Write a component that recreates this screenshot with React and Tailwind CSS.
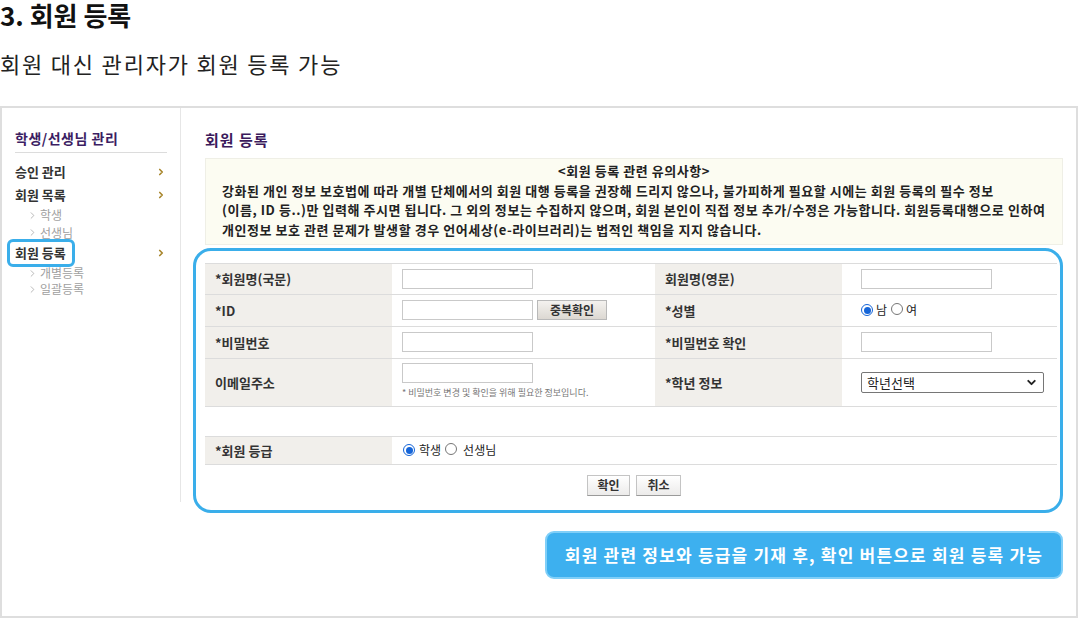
import React from 'react';
import { ChevronRight, ChevronDown } from 'lucide-react';

const KR = { fontFamily: '"Noto Sans CJK KR", "Noto Sans", sans-serif' };

const Radio = ({ checked }) =>
    checked ? (
        <span className="inline-flex items-center justify-center w-[12px] h-[12px] rounded-full border border-[#1565d8] bg-white">
            <span className="w-[7px] h-[7px] rounded-full bg-[#1565d8]" />
        </span>
    ) : (
        <span className="inline-block w-[12px] h-[12px] rounded-full border border-[#767676] bg-white" />
    );

const Box = ({ className = '' }) => (
    <div className={`w-[131px] h-[20px] border border-[#c9c9c9] bg-white ${className}`} />
);

const Label = ({ children, className = '' }) => (
    <div className={`bg-[#f1efeb] pl-[10px] flex items-center text-[13px] font-bold text-[#333] ${className}`}>
        {children}
    </div>
);

const SideItem = ({ label, className = '' }) => (
    <div className={`flex items-center justify-between text-[13px] font-bold text-[#333] ${className}`}>
        <span>{label}</span>
        <ChevronRight size={10} strokeWidth={4} className="text-[#a8862c] mr-[1px]" />
    </div>
);

const SubItem = ({ label, className = '' }) => (
    <div className={`flex items-center pl-[12px] text-[12px] text-[#a0a0a0] ${className}`}>
        <ChevronRight size={11} strokeWidth={1.5} className="text-[#999] mr-[2px]" />
        <span>{label}</span>
    </div>
);

export default function App() {
    return (
        <div className="w-[1080px] h-[618px] bg-white overflow-hidden" style={KR}>
            <h1 className="text-[26px] leading-[30px] font-bold text-[#111]">3. 회원 등록</h1>
            <p className="mt-[18px] text-[22px] leading-[30px] tracking-[1.8px] text-[#222]">회원 대신 관리자가 회원 등록 가능</p>

            <div className="mt-[28px] w-[1078px] h-[512px] border-2 border-[#dedede] flex">
                {/* sidebar */}
                <div className="w-[179px] h-[394px] border-r border-[#e6e6e6] px-[13px] pt-[20px] shrink-0">
                    <div className="pb-[4px] border-b border-[#dcdcdc]">
                        <div className="h-[20px] leading-[20px] text-[14px] tracking-[0.5px] font-bold text-[#3c1e63]">학생/선생님 관리</div>
                    </div>
                    <SideItem label="승인 관리" className="mt-[7px] h-[24px]" />
                    <SideItem label="회원 목록" className="h-[22px]" />
                    <SubItem label="학생" className="h-[18px]" />
                    <SubItem label="선생님" className="h-[17px]" />
                    <div className="flex items-center justify-between h-[24px] text-[13px] font-bold text-[#333]">
                        <span className="relative">
                            회원 등록
                            <span className="absolute -left-[8px] -right-[9px] -top-[4px] -bottom-[4px] border-[3px] border-[#3aaeea] rounded-[6px]" />
                        </span>
                        <ChevronRight size={10} strokeWidth={4} className="text-[#a8862c] mr-[1px]" />
                    </div>
                    <SubItem label="개별등록" className="h-[16px]" />
                    <SubItem label="일괄등록" className="h-[16px]" />
                </div>

                {/* main */}
                <div className="flex-1 pl-[24px] pr-[13px] pt-[22px] flex flex-col">
                    <div className="h-[20px] leading-[20px] text-[15px] tracking-[1px] font-bold text-[#3b1a5c]">회원 등록</div>

                    <div className="mt-[8px] bg-[#fcfcf2] border border-[#efefe6] pl-[16px] pt-[2px] pb-[4px] text-[13px] leading-[19.7px] font-bold text-[#222] tracking-[0.55px] whitespace-nowrap">
                        <div className="text-center -ml-[16px]">&lt;회원 등록 관련 유의사항&gt;</div>
                        <div>강화된 개인 정보 보호법에 따라 개별 단체에서의 회원 대행 등록을 권장해 드리지 않으나, 불가피하게 필요할 시에는 회원 등록의 필수 정보</div>
                        <div>(이름, ID 등..)만 입력해 주시면 됩니다. 그 외의 정보는 수집하지 않으며, 회원 본인이 직접 정보 추가/수정은 가능합니다. 회원등록대행으로 인하여</div>
                        <div>개인정보 보호 관련 문제가 발생할 경우 언어세상(e-라이브러리)는 법적인 책임을 지지 않습니다.</div>
                    </div>

                    {/* highlighted form */}
                    <div className="mt-[3px] -ml-[12px] border-[3px] border-[#3aaeea] rounded-[18px] pl-[9px] pr-[3px] pt-[12px] pb-[14px]">
                        <div className="grid grid-cols-[187px_263px_187px_1fr] border-t border-[#dcdcdc] text-[#333]">
                            <Label className="h-[31px] border-b border-[#dcdcdc]">*회원명(국문)</Label>
                            <div className="h-[31px] border-b border-[#dcdcdc] pl-[10px] flex items-center"><Box /></div>
                            <Label className="h-[31px] border-b border-[#dcdcdc]">회원명(영문)</Label>
                            <div className="h-[31px] border-b border-[#dcdcdc] pl-[19px] flex items-center"><Box /></div>

                            <Label className="h-[32px] border-b border-[#dcdcdc]">*ID</Label>
                            <div className="h-[32px] border-b border-[#dcdcdc] pl-[10px] flex items-center gap-[4px]">
                                <Box />
                                <div className="w-[70px] h-[20px] border border-[#b9b9b9] bg-gradient-to-b from-[#f4f2ef] to-[#dcd8d2] flex items-center justify-center text-[12px] font-bold text-[#333]">중복확인</div>
                            </div>
                            <Label className="h-[32px] border-b border-[#dcdcdc]">*성별</Label>
                            <div className="h-[32px] border-b border-[#dcdcdc] pl-[19px] flex items-center text-[12px] text-[#222]">
                                <Radio checked />
                                <span className="ml-[3px]">남</span>
                                <span className="ml-[4px]"><Radio /></span>
                                <span className="ml-[3px]">여</span>
                            </div>

                            <Label className="h-[32px] border-b border-[#dcdcdc]">*비밀번호</Label>
                            <div className="h-[32px] border-b border-[#dcdcdc] pl-[10px] flex items-center"><Box /></div>
                            <Label className="h-[32px] border-b border-[#dcdcdc]">*비밀번호 확인</Label>
                            <div className="h-[32px] border-b border-[#dcdcdc] pl-[19px] flex items-center"><Box /></div>

                            <Label className="h-[48px] border-b border-[#dcdcdc]">이메일주소</Label>
                            <div className="h-[48px] border-b border-[#dcdcdc] pl-[10px] pt-[4px]">
                                <Box />
                                <div className="mt-[3px] text-[9px] leading-[14px] text-[#777]">* 비밀번호 변경 및 확인을 위해 필요한 정보입니다.</div>
                            </div>
                            <Label className="h-[48px] border-b border-[#dcdcdc]">*학년 정보</Label>
                            <div className="h-[48px] border-b border-[#dcdcdc] pl-[19px] flex items-center">
                                <div className="w-[183px] h-[21px] border border-[#767676] rounded-[2px] bg-white flex items-center justify-between pl-[5px] pr-[5px] text-[13px] text-[#222]">
                                    <span>학년선택</span>
                                    <ChevronDown size={13} strokeWidth={3.5} className="text-[#222]" />
                                </div>
                            </div>

                            <div className="col-span-4 h-[30px] border-b border-[#dcdcdc]" />

                            <Label className="h-[28px] border-b border-[#dcdcdc]">*회원 등급</Label>
                            <div className="col-span-3 h-[28px] border-b border-[#dcdcdc] pl-[11px] flex items-center text-[12px] text-[#222]">
                                <Radio checked />
                                <span className="ml-[4px]">학생</span>
                                <span className="ml-[4px]"><Radio /></span>
                                <span className="ml-[6px]">선생님</span>
                            </div>
                        </div>

                        <div className="mt-[10px] flex justify-center gap-[6px] pl-[6px]">
                            <div className="w-[43px] h-[21px] border border-[#c4c4c4] border-b-[#9a9a9a] bg-gradient-to-b from-white to-[#ecebea] flex items-center justify-center text-[12px] font-bold text-[#333]">확인</div>
                            <div className="w-[45px] h-[21px] border border-[#c4c4c4] border-b-[#9a9a9a] bg-gradient-to-b from-white to-[#ecebea] flex items-center justify-center text-[12px] font-bold text-[#333]">취소</div>
                        </div>
                    </div>

                    <div className="mt-[18px] self-end w-[518px] h-[48px] rounded-[9px] border-2 border-[#80cff8] bg-[#3db0ef] flex items-center justify-center text-[17px] font-bold text-white tracking-[1.2px]">
                        회원 관련 정보와 등급을 기재 후, 확인 버튼으로 회원 등록 가능
                    </div>
                </div>
            </div>
        </div>
    );
}
